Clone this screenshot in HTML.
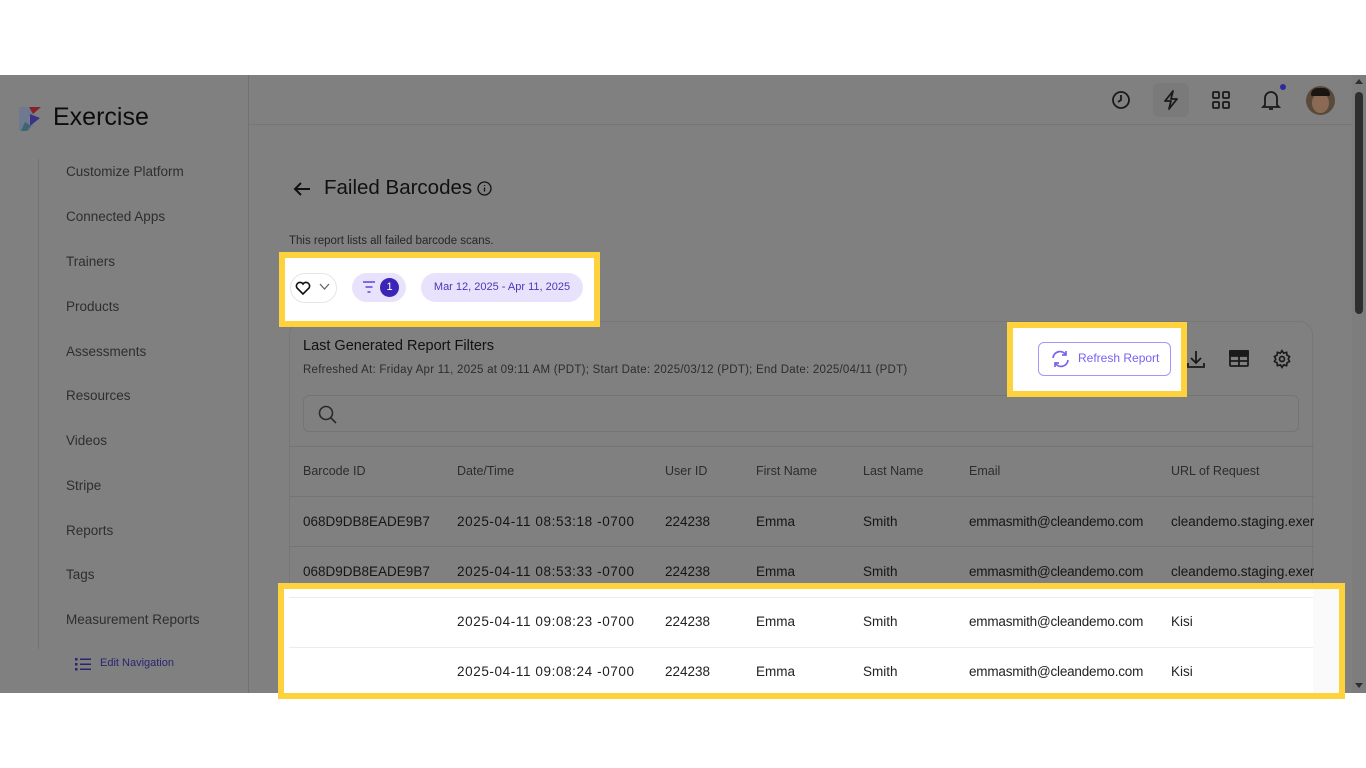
<!DOCTYPE html>
<html><head><meta charset="utf-8">
<style>
*{box-sizing:border-box;margin:0;padding:0}
body{width:1366px;height:768px;background:#fff;position:relative;overflow:hidden;font-family:"Liberation Sans",sans-serif;}
.a{position:absolute}
.app{left:0;top:75px;width:1366px;height:618px;background:#808080;overflow:hidden}
.side{left:0;top:0;width:249px;height:618px;background:#808080;border-right:1px solid #727272}
.nav{left:66px;font-size:13.5px;color:#2e2e2e}
.top{left:249px;top:0;width:1103px;height:50px;border-bottom:1px solid #767676}
.scroll{left:1352px;top:0;width:14px;height:618px;background:#7d7d7d}
.card{left:289px;top:246px;width:1024px;height:400px;border:1px solid #777;border-radius:14px;background:#808080}
.cell{font-size:13.5px;color:#151515;white-space:nowrap}
.dt{letter-spacing:0.6px}
.hd{font-size:12.5px;color:#2c2c2c;white-space:nowrap}
.hl{border:6px solid #fdd23c;background:#fff}
.row{border-top:1px solid #747474}
</style></head><body>
<div class="a app">
 <div class="a side">
  <svg class="a" style="left:17px;top:29px" width="28" height="28" viewBox="0 0 28 28">
   <path d="M2 3h9l6 6-6 6 6 6-6 6H2z" fill="#6f7a90"/><path d="M12 3h12l-8 7z" fill="#8a1f2a"/><path d="M13 10l10 4-10 8z" fill="#3b3288"/><path d="M8 18l6 4-4 5H4z" fill="#3d6670"/>
  </svg>
  <div class="a" style="left:53px;top:28px;font-size:25px;color:#0d0d0d">Exercise</div>
  <div class="a" style="left:38px;top:84px;width:1px;height:490px;background:#727272"></div>
  <div class="a nav" style="top:89px">Customize Platform</div>
  <div class="a nav" style="top:134px">Connected Apps</div>
  <div class="a nav" style="top:179px">Trainers</div>
  <div class="a nav" style="top:224px">Products</div>
  <div class="a nav" style="top:269px">Assessments</div>
  <div class="a nav" style="top:313px">Resources</div>
  <div class="a nav" style="top:358px">Videos</div>
  <div class="a nav" style="top:403px">Stripe</div>
  <div class="a nav" style="top:448px">Reports</div>
  <div class="a nav" style="top:492px">Tags</div>
  <div class="a nav" style="top:537px">Measurement Reports</div>
  <svg class="a" style="left:75px;top:582px" width="16" height="14" viewBox="0 0 16 14" fill="#2a2470"><rect x="0" y="1" width="2.5" height="2.5"/><rect x="0" y="6" width="2.5" height="2.5"/><rect x="0" y="11" width="2.5" height="2.5"/><rect x="5" y="1.5" width="11" height="1.5"/><rect x="5" y="6.5" width="11" height="1.5"/><rect x="5" y="11.5" width="11" height="1.5"/></svg>
  <div class="a" style="left:100px;top:582px;font-size:11px;color:#2a2470">Edit Navigation</div>
 </div>
 <div class="a top"></div>
 <svg class="a" style="left:1111px;top:15px" width="20" height="20" viewBox="0 0 20 20" fill="none" stroke="#1a1a1a" stroke-width="1.8"><circle cx="10" cy="10" r="8"/><path d="M10 5v5l-3 2"/></svg>
 <div class="a" style="left:1153px;top:8px;width:36px;height:34px;background:#7a7a7a;border-radius:5px"></div>
 <svg class="a" style="left:1162px;top:15px" width="18" height="20" viewBox="0 0 18 20" fill="none" stroke="#1a1a1a" stroke-width="1.8" stroke-linejoin="round"><path d="M11 1L3 11h6l-2 8 8-10H9z"/></svg>
 <svg class="a" style="left:1212px;top:16px" width="18" height="18" viewBox="0 0 18 18" fill="none" stroke="#1a1a1a" stroke-width="1.8"><rect x="1" y="1" width="6" height="6" rx="1"/><rect x="11" y="1" width="6" height="6" rx="1"/><rect x="1" y="11" width="6" height="6" rx="1"/><rect x="11" y="11" width="6" height="6" rx="1"/></svg>
 <svg class="a" style="left:1261px;top:14px" width="20" height="22" viewBox="0 0 20 22" fill="none" stroke="#1a1a1a" stroke-width="1.8"><path d="M4 16V9a6 6 0 0 1 12 0v7l2 2H2z"/><path d="M8 20h4"/></svg>
 <div class="a" style="left:1280px;top:9px;width:6px;height:6px;border-radius:50%;background:#2e2a9a"></div>
 <div class="a" style="left:1306px;top:11px;width:29px;height:29px;border-radius:50%;background:#5a4a3c;overflow:hidden"><div class="a" style="left:6px;top:7px;width:17px;height:20px;border-radius:50%;background:#8a6a55"></div><div class="a" style="left:5px;top:2px;width:19px;height:8px;border-radius:8px 8px 2px 2px;background:#1a1412"></div></div>
 <div class="a scroll"><div class="a" style="left:3px;top:17px;width:8px;height:222px;border-radius:4px;background:#2e2e2e"></div><div class="a" style="left:3px;top:4px;border:4px solid transparent;border-bottom:5px solid #2e2e2e;border-top:0"></div><div class="a" style="left:3px;top:608px;border:4px solid transparent;border-top:5px solid #2e2e2e;border-bottom:0"></div></div>

 <svg class="a" style="left:293px;top:106px" width="18" height="16" viewBox="0 0 18 16" fill="none" stroke="#111" stroke-width="2"><path d="M17 8H2M8 2L2 8l6 6"/></svg>
 <div class="a" style="left:324px;top:101px;font-size:20.5px;color:#111">Failed Barcodes</div>
 <svg class="a" style="left:477px;top:106px" width="15" height="15" viewBox="0 0 15 15" fill="none" stroke="#111" stroke-width="1.3"><circle cx="7.5" cy="7.5" r="6.5"/><path d="M7.5 6.5v4M7.5 4v1"/></svg>
 <div class="a" style="left:289px;top:160px;font-size:11.5px;color:#262626">This report lists all failed barcode scans.</div>

 <div class="a card">
  <div class="a" style="left:13px;top:16px;font-size:14.5px;color:#111">Last Generated Report Filters</div>
  <div class="a" style="left:13px;top:42px;font-size:11.5px;color:#2c2c2c;letter-spacing:0.25px">Refreshed At: Friday Apr 11, 2025 at 09:11 AM (PDT); Start Date: 2025/03/12 (PDT); End Date: 2025/04/11 (PDT)</div>
  <svg class="a" style="left:896px;top:27px" width="20" height="20" viewBox="0 0 20 20" fill="none" stroke="#1a1a1a" stroke-width="1.8"><path d="M10 2v11M5 9l5 5 5-5M2 14v4h16v-4"/></svg>
  <svg class="a" style="left:939px;top:28px" width="20" height="17" viewBox="0 0 20 17" fill="none" stroke="#1a1a1a" stroke-width="1.8"><rect x="1" y="1" width="18" height="15" rx="1"/><path d="M1 6h18M10 6v10M1 11h18"/><rect x="1" y="1" width="18" height="4" fill="#1a1a1a"/></svg>
  <svg class="a" style="left:982px;top:27px" width="20" height="20" viewBox="0 0 24 24" fill="none" stroke="#1a1a1a" stroke-width="2"><circle cx="12" cy="12" r="3"/><path d="M12 2l2 3 3.5-1 .5 3.5 3 1.5-1.5 3 1.5 3-3 1.5-.5 3.5-3.5-1-2 3-2-3-3.5 1-.5-3.5-3-1.5 1.5-3L3 9l3-1.5L6.5 4 10 5z"/></svg>
  <div class="a" style="left:13px;top:73px;width:996px;height:37px;border:1px solid #747474;border-radius:6px"></div>
  <svg class="a" style="left:28px;top:83px" width="19" height="19" viewBox="0 0 19 19" fill="none" stroke="#2a2a2a" stroke-width="1.6"><circle cx="8" cy="8" r="6.5"/><path d="M13 13l5 5"/></svg>
  <div class="a" style="left:0;top:124px;width:1024px;height:1px;background:#747474"></div>
  <div class="a hd" style="left:13px;top:142px">Barcode ID</div>
  <div class="a hd" style="left:167px;top:142px">Date/Time</div>
  <div class="a hd" style="left:375px;top:142px">User ID</div>
  <div class="a hd" style="left:466px;top:142px">First Name</div>
  <div class="a hd" style="left:573px;top:142px">Last Name</div>
  <div class="a hd" style="left:679px;top:142px">Email</div>
  <div class="a hd" style="left:881px;top:142px">URL of Request</div>
  <div class="a row" style="left:0;top:174px;width:1024px"></div>
  <div class="a cell" style="left:13px;top:192px">068D9DB8EADE9B7</div>
  <div class="a cell dt" style="left:167px;top:192px">2025-04-11 08:53:18 -0700</div>
  <div class="a cell" style="left:375px;top:192px">224238</div>
  <div class="a cell" style="left:466px;top:192px">Emma</div>
  <div class="a cell" style="left:573px;top:192px">Smith</div>
  <div class="a cell" style="left:679px;top:192px;letter-spacing:-0.2px">emmasmith@cleandemo.com</div>
  <div class="a cell" style="left:881px;top:192px;width:143px;overflow:hidden">cleandemo.staging.exercise</div>
  <div class="a row" style="left:0;top:224px;width:1024px"></div>
  <div class="a cell" style="left:13px;top:242px">068D9DB8EADE9B7</div>
  <div class="a cell dt" style="left:167px;top:242px">2025-04-11 08:53:33 -0700</div>
  <div class="a cell" style="left:375px;top:242px">224238</div>
  <div class="a cell" style="left:466px;top:242px">Emma</div>
  <div class="a cell" style="left:573px;top:242px">Smith</div>
  <div class="a cell" style="left:679px;top:242px;letter-spacing:-0.2px">emmasmith@cleandemo.com</div>
  <div class="a cell" style="left:881px;top:242px;width:143px;overflow:hidden">cleandemo.staging.exercise</div>
 </div>
</div>

<!-- highlight 1 -->
<div class="a hl" style="left:279px;top:252px;width:321px;height:75px">
 <div class="a" style="left:5px;top:15px;width:47px;height:30px;border:1px solid #e6e6e6;border-radius:15px"></div>
 <svg class="a" style="left:10px;top:23px" width="16" height="14" viewBox="0 0 16 14" fill="none" stroke="#111" stroke-width="1.6"><path d="M8 13L2 7a3.3 3.3 0 0 1 6-4 3.3 3.3 0 0 1 6 4z"/></svg>
 <svg class="a" style="left:34px;top:25px" width="11" height="8" viewBox="0 0 11 8" fill="none" stroke="#666" stroke-width="1.3"><path d="M1 1l4.5 5L10 1"/></svg>
 <div class="a" style="left:67px;top:15px;width:54px;height:29px;border-radius:15px;background:#e9e2fd"></div>
 <svg class="a" style="left:77px;top:23px" width="14" height="12" viewBox="0 0 14 12" fill="none" stroke="#5b45d6" stroke-width="1.6"><path d="M1 1h12M3.5 6h7M5.5 11h3"/></svg>
 <div class="a" style="left:95px;top:20px;width:19px;height:19px;border-radius:50%;background:#3a25b8;color:#fff;font-size:11px;text-align:center;line-height:19px">1</div>
 <div class="a" style="left:136px;top:15px;width:162px;height:29px;border-radius:15px;background:#e9e2fd;color:#4a38b5;font-size:11px;text-align:center;line-height:29px">Mar 12, 2025 - Apr 11, 2025</div>
</div>

<!-- highlight 2 -->
<div class="a hl" style="left:1007px;top:322px;width:180px;height:75px">
 <div class="a" style="left:25px;top:14px;width:133px;height:34px;border:1.5px solid #a895f5;border-radius:6px"></div>
 <svg class="a" style="left:38px;top:22px" width="19" height="18" viewBox="0 0 19 18" fill="none" stroke="#7a62f0" stroke-width="1.7"><path d="M2 8a7 7 0 0 1 13-3M17 10a7 7 0 0 1-13 3M15 1v4h-4M4 17v-4h4"/></svg>
 <div class="a" style="left:65px;top:23px;font-size:12px;color:#7a62f0">Refresh Report</div>
</div>

<!-- highlight 3 -->
<div class="a hl" style="left:278px;top:583px;width:1067px;height:116px">
 <div class="a" style="left:1029px;top:0;width:26px;height:104px;background:#fafafa"></div>
 <div class="a" style="left:5px;top:8px;width:1024px;height:1px;background:#ececec"></div>
 <div class="a" style="left:5px;top:58px;width:1024px;height:1px;background:#ececec"></div>
 <div class="a cell dt" style="left:173px;top:25px;color:#222">2025-04-11 09:08:23 -0700</div>
 <div class="a cell" style="left:381px;top:25px;color:#222">224238</div>
 <div class="a cell" style="left:472px;top:25px;color:#222">Emma</div>
 <div class="a cell" style="left:579px;top:25px;color:#222">Smith</div>
 <div class="a cell" style="left:685px;top:25px;color:#222;letter-spacing:-0.2px">emmasmith@cleandemo.com</div>
 <div class="a cell" style="left:887px;top:25px;color:#222">Kisi</div>
 <div class="a cell dt" style="left:173px;top:75px;color:#222">2025-04-11 09:08:24 -0700</div>
 <div class="a cell" style="left:381px;top:75px;color:#222">224238</div>
 <div class="a cell" style="left:472px;top:75px;color:#222">Emma</div>
 <div class="a cell" style="left:579px;top:75px;color:#222">Smith</div>
 <div class="a cell" style="left:685px;top:75px;color:#222;letter-spacing:-0.2px">emmasmith@cleandemo.com</div>
 <div class="a cell" style="left:887px;top:75px;color:#222">Kisi</div>
</div>
</body></html>
